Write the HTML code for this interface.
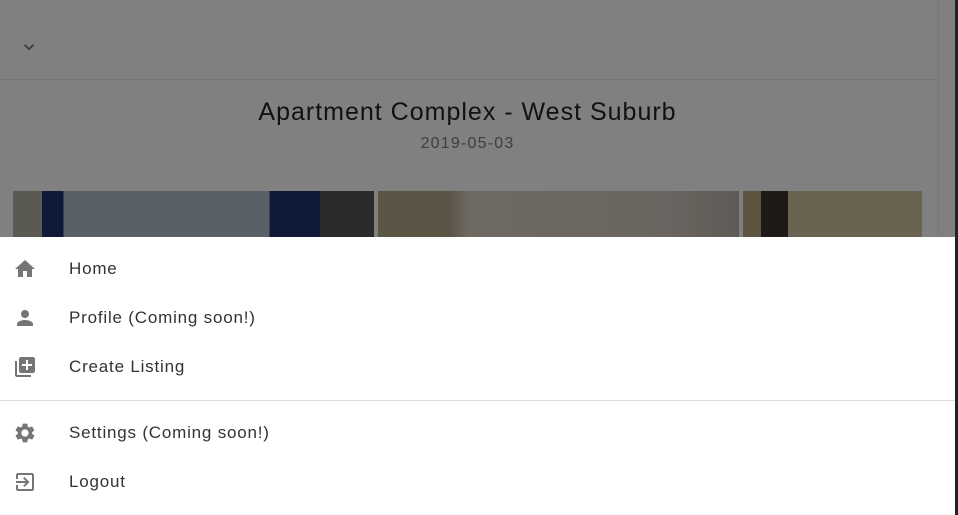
<!DOCTYPE html>
<html><head><style>
body{margin:0;width:958px;height:515px;overflow:hidden;position:relative;font-family:"Liberation Sans",Roboto,sans-serif;background:#808080}
.bg{position:absolute;inset:0;background:#808080}
.vline{position:absolute;left:938px;top:0;width:1px;height:515px;background:#777}
.edge{position:absolute;left:955px;top:0;width:3px;height:515px;background:#222}
.hline{position:absolute;left:0;top:79px;width:938px;height:1px;background:#757575}
.title{position:absolute;left:0;width:935px;top:98px;text-align:center;font-size:25px;color:#111;letter-spacing:1px}
.date{position:absolute;left:0;width:935px;top:135px;text-align:center;font-size:16px;color:#3a3f44;letter-spacing:1.2px}
.img{position:absolute;top:191px;height:46px}
.drawer{position:absolute;left:0;top:237px;width:955px;height:278px;background:#fff}
.item{position:absolute;left:0;height:49px;width:955px}
.item svg{position:absolute;left:13px;top:12px;width:24px;height:24px;fill:#757575}
.item span{position:absolute;left:69px;top:14px;font-size:17px;color:#333;letter-spacing:0.8px}
.div{position:absolute;left:0;top:163px;width:955px;height:1px;background:#ddd}
</style></head><body>
<div class="bg"></div>
<svg style="position:absolute;left:19px;top:37px" width="20" height="20" viewBox="0 0 24 24"><path d="M7.4 8.6L12 13.2l4.6-4.6L18 10l-6 6-6-6z" fill="#3a3a3a"/></svg>
<div class="hline"></div>
<div class="vline"></div>
<div class="edge"></div>
<div class="title">Apartment Complex - West Suburb</div>
<div class="date">2019-05-03</div>
<div class="img" style="left:13px;width:361px;background:linear-gradient(90deg,#5a5a52 0 8%,#0f1a3a 8% 14%,#5a6068 14% 71%,#0f1a3a 71% 85%,#2b2b2b 85%)"></div>
<div class="img" style="left:378px;width:361px;background:linear-gradient(90deg,#5b5546 0 20%,#6e6a62 25%,#6a6560 80%,#5e5a55)"></div>
<div class="img" style="left:743px;width:179px;background:linear-gradient(90deg,#5e5540 0 10%,#1e1a17 10% 25%,#6b6352 25%)"></div>
<div class="drawer">
 <div class="item" style="top:8px"><svg viewBox="0 0 24 24"><path d="M10 20v-6h4v6h5v-8h3L12 3 2 12h3v8z"/></svg><span>Home</span></div>
 <div class="item" style="top:57px"><svg viewBox="0 0 24 24"><path d="M12 12c2.2 0 4-1.8 4-4s-1.8-4-4-4-4 1.8-4 4 1.8 4 4 4zm0 2c-2.7 0-8 1.3-8 4v2h16v-2c0-2.7-5.3-4-8-4z"/></svg><span>Profile (Coming soon!)</span></div>
 <div class="item" style="top:106px"><svg viewBox="0 0 24 24"><path d="M4 6H2v14c0 1.1.9 2 2 2h14v-2H4V6zm16-4H8c-1.1 0-2 .9-2 2v12c0 1.1.9 2 2 2h12c1.1 0 2-.9 2-2V4c0-1.1-.9-2-2-2zm-1 9h-4v4h-2v-4H9V9h4V5h2v4h4v2z"/></svg><span>Create Listing</span></div>
 <div class="div"></div>
 <div class="item" style="top:172px"><svg viewBox="0 0 24 24"><path d="M19.1 12.9c.04-.3.06-.6.06-.9s-.02-.6-.07-.9l2-1.5c.2-.1.2-.4.1-.6l-1.9-3.3c-.1-.2-.4-.3-.6-.2l-2.4 1c-.5-.4-1-.7-1.6-.9L14.4 3c0-.2-.2-.4-.5-.4h-3.8c-.2 0-.4.2-.5.4l-.4 2.6c-.6.2-1.1.5-1.600.9l-2.4-1c-.2-.1-.5 0-.6.2L2.7 9c-.1.2-.1.5.1.6l2 1.5c0 .3-.1.6-.1.9s0 .6.1.9l-2 1.5c-.2.2-.2.4-.1.6l1.9 3.3c.1.2.4.3.6.2l2.4-1c.5.4 1 .7 1.6.9l.4 2.6c0 .2.2.4.5.4h3.8c.2 0 .4-.2.5-.4l.4-2.6c.6-.2 1.1-.5 1.6-.9l2.4 1c.2.1.5 0 .6-.2l1.9-3.3c.1-.2.1-.5-.1-.6l-2-1.5zM12 15.6c-2 0-3.6-1.6-3.6-3.6S10 8.4 12 8.4s3.6 1.6 3.6 3.6-1.6 3.6-3.6 3.6z"/></svg><span>Settings (Coming soon!)</span></div>
 <div class="item" style="top:221px"><svg viewBox="0 0 24 24"><path d="M10.1 15.6l1.4 1.4 5-5-5-5-1.4 1.4 2.6 2.6H3v2h9.7l-2.6 2.6zM19 3H5c-1.1 0-2 .9-2 2v4h2V5h14v14H5v-4H3v4c0 1.1.9 2 2 2h14c1.1 0 2-.9 2-2V5c0-1.1-.9-2-2-2z"/></svg><span>Logout</span></div>
</div>
</body></html>
